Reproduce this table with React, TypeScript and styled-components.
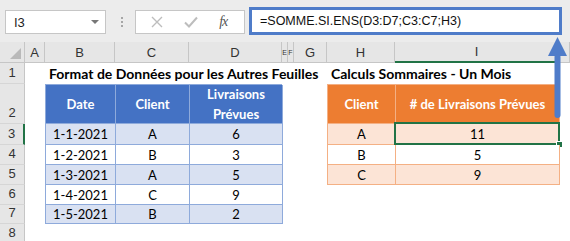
import React from 'react';
import styled, { createGlobalStyle } from 'styled-components';

const GlobalStyle = createGlobalStyle`
  html, body {
    margin: 0;
    padding: 0;
    background: #fff;
  }
  body {
    font-family: Lato, 'Liberation Sans', sans-serif;
  }
`;

const SHEET_COLS = '25px 20px 70px 74px 93px 6px 6px 33px 68px 164px 1fr';
const SHEET_ROWS = '21px 21px 40px 21px 20px 20px 20px 19px 20px';

const Window = styled.div`
  position: relative;
  width: 570px;
  height: 241px;
  overflow: hidden;
  background: #fff;
`;

/* formula bar */

const FormulaRow = styled.div`
  display: flex;
  align-items: center;
  height: 42px;
  padding-left: 5px;
  box-sizing: border-box;
  background: #ececec;
`;

const NameBox = styled.div`
  display: flex;
  align-items: center;
  justify-content: space-between;
  width: 101px;
  height: 24px;
  margin-top: 2px;
  padding: 0 6px 0 8px;
  box-sizing: border-box;
  background: #fff;
  border: 1px solid #c6c6c6;
  font: 13px 'Liberation Sans', sans-serif;
  color: #222;
`;

const Caret = styled.span`
  width: 0;
  height: 0;
  border-left: 4px solid transparent;
  border-right: 4px solid transparent;
  border-top: 4px solid #777;
`;

const Grip = styled.div`
  display: flex;
  flex-direction: column;
  gap: 2px;
  margin: 2px 12px 0 15px;

  span {
    width: 2px;
    height: 2px;
    background: #a6a6a6;
  }
`;

const FnBox = styled.div`
  display: flex;
  align-items: center;
  justify-content: space-around;
  width: 110px;
  height: 24px;
  margin-top: 2px;
  padding: 0 6px 0 4px;
  box-sizing: border-box;
  background: #fff;
  border: 1px solid #c6c6c6;
`;

const Fx = styled.span`
  font: italic 14px 'Liberation Serif', serif;
  color: #555;
  letter-spacing: -1px;
`;

const FormulaInput = styled.div`
  display: flex;
  align-items: center;
  width: 313px;
  height: 28px;
  margin-left: 4px;
  padding-left: 8px;
  box-sizing: border-box;
  background: #fff;
  border: 3px solid #4f7cc9;
  font: 12.5px 'Liberation Sans', sans-serif;
  color: #111;
`;

/* sheet grid */

const Sheet = styled.div`
  display: grid;
  grid-template-columns: ${SHEET_COLS};
  grid-template-rows: ${SHEET_ROWS};
`;

const Corner = styled.div`
  position: relative;
  background: #e6e6e6;
  border-right: 1px solid #c6c6c6;
  border-bottom: 1px solid #c6c6c6;
  box-sizing: border-box;

  &::after {
    content: '';
    position: absolute;
    right: 3px;
    bottom: 3px;
    width: 11px;
    height: 11px;
    background: #b9b9b9;
    clip-path: polygon(100% 0, 100% 100%, 0 100%);
  }
`;

const ColHead = styled.div<{ $active?: boolean; $narrow?: boolean }>`
  display: flex;
  align-items: center;
  justify-content: center;
  overflow: hidden;
  background: #e6e6e6;
  border-right: 1px solid #c6c6c6;
  border-bottom: ${p => (p.$active ? '2px solid #217346' : '1px solid #c6c6c6')};
  box-sizing: border-box;
  font: ${p => (p.$narrow ? '7px' : '13px')} 'Liberation Sans', sans-serif;
  color: #333;
`;

const RowHead = styled.div<{ $row: number; $active?: boolean }>`
  grid-column: 1;
  grid-row: ${p => p.$row + 1};
  display: flex;
  align-items: flex-end;
  justify-content: center;
  padding-bottom: 3px;
  background: #e6e6e6;
  border-right: ${p => (p.$active ? '2px solid #217346' : '1px solid #c6c6c6')};
  border-bottom: 1px solid #d6d6d6;
  box-sizing: border-box;
  font: 13px 'Liberation Sans', sans-serif;
  color: #333;
`;

const Title = styled.div<{ $cols: string }>`
  grid-column: ${p => p.$cols};
  grid-row: 2;
  display: flex;
  align-items: flex-end;
  padding: 0 0 2px 4px;
  white-space: nowrap;
  font-weight: 700;
  font-size: 14px;
  color: #000;
`;

/* data tables */

type Tone = { head: string; band: string; line: string };

const BLUE: Tone = { head: '#4472c4', band: '#d9e1f2', line: '#8eaadb' };
const ORANGE: Tone = { head: '#ed7d31', band: '#fce4d6', line: '#f4b084' };

const Table = styled.div<{ $cols: string; $rows: string; $area: string; $tone: Tone }>`
  grid-column: ${p => p.$area.split('|')[0]};
  grid-row: ${p => p.$area.split('|')[1]};
  display: grid;
  grid-template-columns: ${p => p.$cols};
  grid-template-rows: ${p => p.$rows};
  align-self: start;
  border-top: 1px solid ${p => p.$tone.line};
  border-left: 1px solid ${p => p.$tone.line};
  font-size: 13px;
`;

const HeadCell = styled.div<{ $tone: Tone }>`
  display: flex;
  align-items: center;
  justify-content: center;
  text-align: center;
  line-height: 20px;
  background: ${p => p.$tone.head};
  border-right: 1px solid ${p => p.$tone.line};
  border-bottom: 1px solid ${p => p.$tone.line};
  box-sizing: border-box;
  color: #fff;
  font-weight: 700;
`;

const Cell = styled.div<{ $tone: Tone; $band: boolean; $selected?: boolean }>`
  position: relative;
  display: flex;
  align-items: center;
  justify-content: center;
  background: ${p => (p.$band ? p.$tone.band : '#fff')};
  border-right: 1px solid ${p => p.$tone.line};
  border-bottom: 1px solid ${p => p.$tone.line};
  box-sizing: border-box;
  color: #000;

  ${p =>
    p.$selected &&
    `
    &::before {
      content: '';
      position: absolute;
      inset: -2px -1px -1px -2px;
      border: 2px solid #217346;
    }
    &::after {
      content: '';
      position: absolute;
      right: -4px;
      bottom: -4px;
      width: 5px;
      height: 5px;
      background: #217346;
      border: 1px solid #fff;
    }
  `}
`;

const Arrow = styled.svg`
  position: absolute;
  left: 546px;
  top: 36px;
`;

const deliveries = [
  { date: '1-1-2021', client: 'A', qty: 6 },
  { date: '1-2-2021', client: 'B', qty: 3 },
  { date: '1-3-2021', client: 'A', qty: 5 },
  { date: '1-4-2021', client: 'C', qty: 9 },
  { date: '1-5-2021', client: 'B', qty: 2 },
];

const summary = [
  { client: 'A', total: 11 },
  { client: 'B', total: 5 },
  { client: 'C', total: 9 },
];

const columns = ['A', 'B', 'C', 'D', 'E', 'F', 'G', 'H', 'I', ''];

export default function App() {
  return (
    <Window>
      <GlobalStyle />
      <FormulaRow>
        <NameBox>
          I3
          <Caret />
        </NameBox>
        <Grip>
          <span />
          <span />
          <span />
        </Grip>
        <FnBox>
          <svg width="12" height="12" viewBox="0 0 12 12">
            <path d="M1 1 L11 11 M11 1 L1 11" stroke="#bdbdbd" strokeWidth="1.4" />
          </svg>
          <svg width="14" height="12" viewBox="0 0 14 12">
            <path d="M1 6.5 L5 10.5 L13 1.5" stroke="#bdbdbd" strokeWidth="2" fill="none" />
          </svg>
          <Fx>fx</Fx>
        </FnBox>
        <FormulaInput>=SOMME.SI.ENS(D3:D7;C3:C7;H3)</FormulaInput>
      </FormulaRow>

      <Sheet>
        <Corner />
        {columns.map((c, i) => (
          <ColHead key={i} $active={c === 'I'} $narrow={c === 'E' || c === 'F'}>
            {c}
          </ColHead>
        ))}
        {[1, 2, 3, 4, 5, 6, 7, 8].map(n => (
          <RowHead key={n} $row={n} $active={n === 3}>
            {n}
          </RowHead>
        ))}

        <Title $cols="3 / 9">Format de Données pour les Autres Feuilles</Title>
        <Title $cols="9 / 12">Calculs Sommaires - Un Mois</Title>

        <Table
          $area="3 / 6|3 / 9"
          $cols="70px 74px 93px"
          $rows="39px 21px 20px 20px 20px 19px"
          $tone={BLUE}
        >
          <HeadCell $tone={BLUE}>Date</HeadCell>
          <HeadCell $tone={BLUE}>Client</HeadCell>
          <HeadCell $tone={BLUE}>
            Livraisons
            <br />
            Prévues
          </HeadCell>
          {deliveries.map((d, i) => (
            <React.Fragment key={d.date}>
              <Cell $tone={BLUE} $band={i % 2 === 0}>{d.date}</Cell>
              <Cell $tone={BLUE} $band={i % 2 === 0}>{d.client}</Cell>
              <Cell $tone={BLUE} $band={i % 2 === 0}>{d.qty}</Cell>
            </React.Fragment>
          ))}
        </Table>

        <Table
          $area="9 / 11|3 / 7"
          $cols="68px 164px"
          $rows="39px 21px 20px 20px"
          $tone={ORANGE}
        >
          <HeadCell $tone={ORANGE}>Client</HeadCell>
          <HeadCell $tone={ORANGE}># de Livraisons Prévues</HeadCell>
          {summary.map((s, i) => (
            <React.Fragment key={s.client}>
              <Cell $tone={ORANGE} $band={i % 2 === 0}>{s.client}</Cell>
              <Cell $tone={ORANGE} $band={i % 2 === 0} $selected={i === 0}>
                {s.total}
              </Cell>
            </React.Fragment>
          ))}
        </Table>
      </Sheet>

      <Arrow width="24" height="84" viewBox="0 0 24 84">
        <polygon points="2,20 11.5,1 21,20" fill="#4f7cc9" />
        <rect x="8.5" y="18" width="6" height="64" rx="3" fill="#4f7cc9" />
      </Arrow>
    </Window>
  );
}
